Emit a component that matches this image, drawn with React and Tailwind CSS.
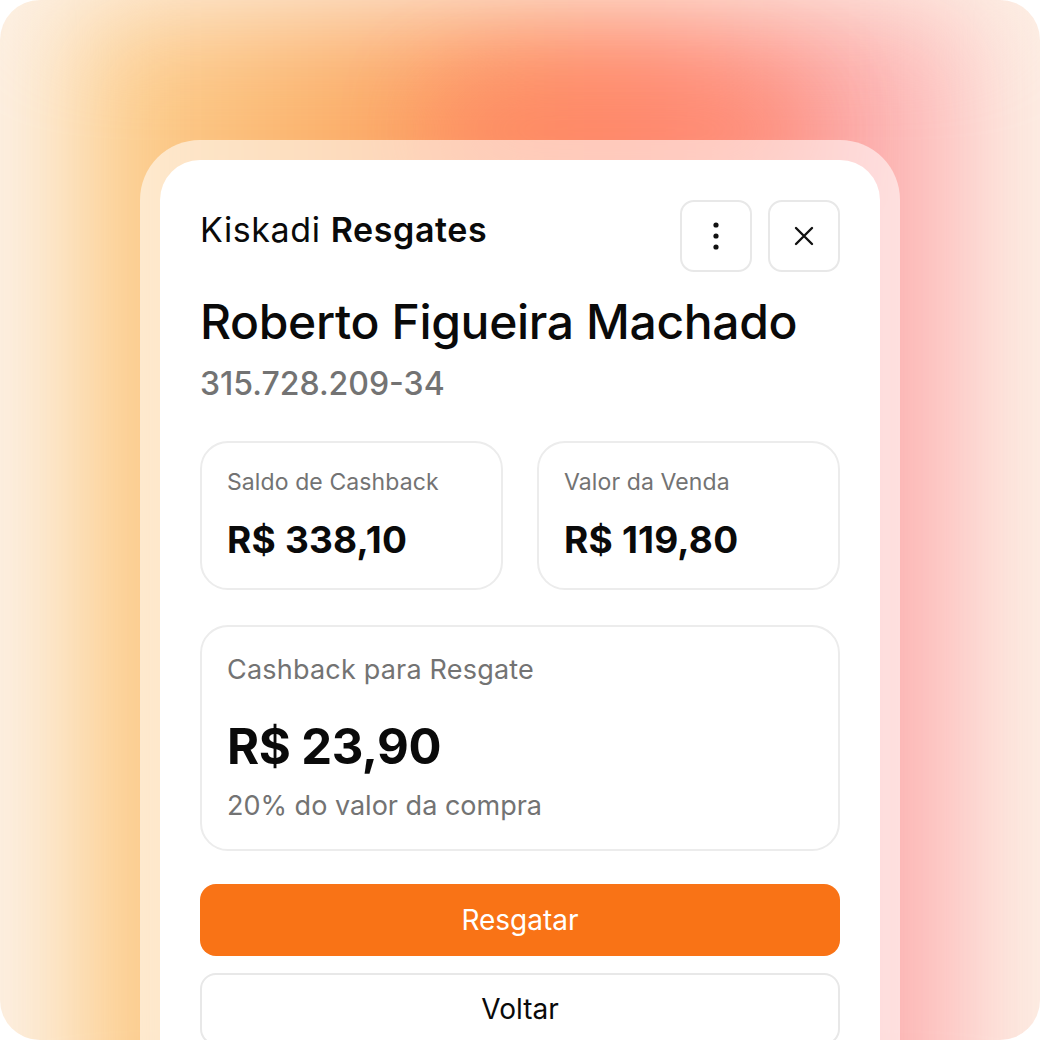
import React from "react";

function StatCard({ label, value }) {
  return (
    <div className="flex-1 rounded-[28px] border-2 border-[#ececec] px-[25px] pt-[23px] pb-[26px]">
      <div className="text-[23px] leading-[32px] text-[#737373] tracking-[0.1px]">{label}</div>
      <div className="mt-[20px] text-[37px] leading-[44px] font-bold text-[#0a0a0a] tracking-[0.2px]">{value}</div>
    </div>
  );
}

export default function App() {
  return (
    <div className="w-[1040px] h-[1040px] bg-white" style={{ fontFamily: "Inter, 'Noto Sans', sans-serif" }}>
      <div className="relative w-[1040px] h-[1040px] rounded-[40px] overflow-hidden bg-[#fdf1e6]">
        <div className="absolute left-[70px] right-[60px] top-[10px] bottom-[-120px] bg-[linear-gradient(90deg,#fcd596_0%,#fbb06a_30%,#fc9560_48%,#ff8a70_62%,#fca4a2_82%,#fdc8c8_100%)] blur-[55px]" />
        <div className="absolute left-[430px] w-[380px] top-[80px] h-[100px] rounded-full bg-[#ff8466] blur-[45px] opacity-60" />
        <div className="relative mt-[140px] mx-[140px] rounded-t-[60px] bg-white/55 p-[20px] pb-0 h-[920px]">
          <div className="h-full rounded-t-[40px] bg-white px-[40px] pt-[40px]">
            <div className="flex items-start justify-between">
              <div className="mt-[9px] text-[34px] leading-[42px] text-[#0a0a0a] tracking-[0.6px]">
                Kiskadi <span className="font-semibold">Resgates</span>
              </div>
              <div className="flex gap-[16px]">
                <button className="flex h-[72px] w-[72px] items-center justify-center rounded-[14px] border-2 border-[#e8e8e8] bg-white">
                  <svg width="24" height="30" viewBox="0 0 24 30" fill="#111">
                    <circle cx="12" cy="4" r="2.6" />
                    <circle cx="12" cy="15" r="2.6" />
                    <circle cx="12" cy="26" r="2.6" />
                  </svg>
                </button>
                <button className="flex h-[72px] w-[72px] items-center justify-center rounded-[14px] border-2 border-[#e8e8e8] bg-white">
                  <svg width="20" height="20" viewBox="0 0 20 20" fill="none" stroke="#111" strokeWidth="2.4" strokeLinecap="round">
                    <path d="M2 2L18 18M18 2L2 18" />
                  </svg>
                </button>
              </div>
            </div>
            <div className="mt-[21px] text-[48px] leading-[58px] font-medium text-[#0a0a0a] tracking-[-0.35px]">Roberto Figueira Machado</div>
            <div className="mt-[13px] text-[32px] leading-[40px] font-medium text-[#737373]">315.728.209-34</div>
            <div className="mt-[37px] flex gap-[34px]">
              <StatCard label="Saldo de Cashback" value="R$ 338,10" />
              <StatCard label="Valor da Venda" value="R$ 119,80" />
            </div>
            <div className="mt-[35px] rounded-[28px] border-2 border-[#ececec] px-[25px] pt-[25px] pb-[25px]">
              <div className="text-[27px] leading-[36px] text-[#737373] tracking-[0.2px]">Cashback para Resgate</div>
              <div className="mt-[30px] text-[49px] leading-[58px] font-bold text-[#0a0a0a] tracking-[-0.5px]">R$ 23,90</div>
              <div className="mt-[12px] text-[27px] leading-[36px] text-[#737373]">20% do valor da compra</div>
            </div>
            <button className="mt-[33px] flex h-[72px] w-full items-center justify-center rounded-[16px] bg-[#f97316] text-[28px] text-white">
              Resgatar
            </button>
            <button className="mt-[17px] flex h-[72px] w-full items-center justify-center rounded-[16px] border-2 border-[#e8e8e8] bg-white text-[28px] text-[#0a0a0a]">
              Voltar
            </button>
          </div>
        </div>
      </div>
    </div>
  );
}
